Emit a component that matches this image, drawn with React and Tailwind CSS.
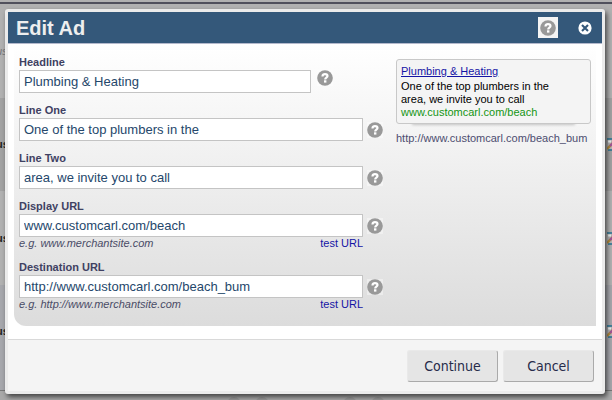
import { useState } from 'react';

const rows = [
  { name: 'us', className: 'h-[94px] bg-[#b1b1b1] italic text-[#77777b]', icon: false },
  { name: 'us', className: 'h-[93px] bg-[#a2a2a2] font-bold text-[#222]', icon: true },
  { name: 'us', className: 'h-[94px] bg-[#b1b1b1] font-bold text-[#222]', icon: true },
  { name: 'us', className: 'h-[105px] bg-[#a6a7ac] pb-3 font-bold text-[#222]', icon: true },
];

function HelpIcon() {
  return (
    <svg viewBox="0 0 16 16" className="size-4" aria-hidden="true">
      <circle cx="8" cy="8" r="7.8" fill="#999" />
      <path d="M5.5 6.4C5.5 4.8 6.5 4.2 8 4.2c1.5 0 2.5.7 2.5 1.9 0 1.6-2.3 1.5-2.3 3.3" fill="none" stroke="#fff" strokeWidth="2.2" />
      <rect x="7" y="10.3" width="2.4" height="2.3" fill="#fff" />
    </svg>
  );
}

function HelpButton({ label }) {
  return (
    <button type="button" aria-label={label} className="shrink-0 bg-white/40">
      <HelpIcon />
    </button>
  );
}

function EditIcon() {
  return (
    <svg viewBox="0 0 13 13" className="size-[13px] shrink-0" aria-hidden="true">
      <rect x="1" y="1" width="11" height="11" fill="#b5b5b5" />
      <path d="M0 1h12v11H1" fill="none" stroke="#267392" strokeWidth="1.6" />
      <path d="M1 2.5h3v2H1z" fill="#e8eeee" />
      <path d="M0 11l6-6" stroke="#b08a3c" strokeWidth="2.4" />
      <path d="M3 8l3-3" stroke="#a0529b" strokeWidth="2" />
    </svg>
  );
}

function Field({ id, label, value, onChange, example, short }) {
  return (
    <div>
      <label htmlFor={id} className="block text-[11px] leading-4 font-bold text-[#3f4162]">{label}</label>
      <div className={short ? 'flex items-start gap-1.5' : 'flex items-center gap-1'}>
        <input
          id={id}
          type="text"
          value={value}
          onChange={(e) => onChange(id, e.target.value)}
          className={`h-[23px] min-w-0 border border-[#c4c4c4] bg-white px-1 text-[13px] text-[#25476b] outline-none ${short ? 'w-[292px]' : 'w-[344px]'}`}
        />
        <HelpButton label={`${label} help`} />
      </div>
      {example && (
        <div className="flex w-[344px] justify-between text-[11px] leading-[13px]">
          <span className="text-[#4a4c66] italic">{example}</span>
          <a href="#test" className="text-[#1414a5]">test URL</a>
        </div>
      )}
    </div>
  );
}

function AdPreview({ ad }) {
  return (
    <div className="mt-[5px] w-[195px] shrink-0">
      <div className="relative">
        <div className="absolute inset-x-4 bottom-0 h-2 shadow-[0_1px_3px_rgba(0,0,0,0.2)]" />
        <div className="relative rounded-[3px] border border-[#c8c8c8] bg-[#f4f4f4] px-1 pt-[5px] pb-1 text-[11px] leading-[13px] text-black">
          <a href="#ad" className="mb-0.5 block text-[#1414a5] underline">{ad.headline}</a>
          <p>{ad.line1}</p>
          <p>{ad.line2}</p>
          <p className="text-[#149614]">{ad.display}</p>
        </div>
      </div>
      <p className="mt-1.5 text-[11px] leading-4 text-[#4d4d70]">{ad.destination}</p>
    </div>
  );
}

function App() {
  const [ad, setAd] = useState({
    headline: 'Plumbing & Heating',
    line1: 'One of the top plumbers in the',
    line2: 'area, we invite you to call',
    display: 'www.customcarl.com/beach',
    destination: 'http://www.customcarl.com/beach_bum',
  });

  const update = (id, value) => setAd({ ...ad, [id]: value });

  return (
    <div className="relative h-screen min-h-[400px] overflow-hidden bg-[#a9a9a9] font-['Liberation_Sans',Arial,sans-serif]">
      {/* Ads list behind the dialog */}
      <div className="border-t-2 border-[#b1b1b1]" aria-hidden="true">
        <div className="h-0.5 bg-[#50505c]" />
        {rows.map((row, index) => (
          <div key={index} className={`-mr-2 -ml-1 flex items-center justify-between text-[11px] ${row.className}`}>
            <span>{row.name}</span>
            {row.icon && <EditIcon />}
          </div>
        ))}
        <div className="h-px bg-[#777]" />
        <div className="flex justify-center gap-3.5 pt-1.5">
          <span className="size-3.5 rounded-full bg-[#999]" />
          <span className="size-3.5 rounded-full bg-[#999]" />
          <span className="ml-15 size-3.5 rounded-full bg-[#999]" />
          <span className="size-3.5 rounded-full bg-[#999]" />
        </div>
      </div>

      <div role="dialog" aria-labelledby="dialog-title" className="absolute inset-x-0 top-[9px] mr-[7px] ml-[5px] rounded-[3px] border-3 border-[#ebebeb] bg-white shadow-[2px_3px_5px_rgba(0,0,0,0.6)]">
        <header className="flex h-8 items-center border-b border-[#b4b9cc] bg-[#34587a] px-2">
          <h1 id="dialog-title" className="flex-1 text-[20px] leading-6 font-bold text-[#eee]">Edit Ad</h1>
          <button type="button" aria-label="Help" className="mr-5 flex h-[21px] w-5 items-center justify-center bg-[#f4f4f4]">
            <HelpIcon />
          </button>
          <button type="button" aria-label="Close" className="mr-0.5">
            <svg viewBox="0 0 14 14" className="size-3.5">
              <circle cx="7" cy="7" r="6.6" fill="#fff" />
              <path d="M4 4l6 6M10 4l-6 6" stroke="#34587a" strokeWidth="2.1" />
            </svg>
          </button>
        </header>

        <form>
          <div className="mx-1.5 mb-[13px] flex justify-between rounded-bl-[12px] bg-linear-to-b from-white to-[#dcdcdc] px-[5px] pt-2.5 pb-[15px]">
            <div className="flex flex-col gap-[9px]">
              <Field id="headline" label="Headline" value={ad.headline} onChange={update} short />
              <Field id="line1" label="Line One" value={ad.line1} onChange={update} />
              <Field id="line2" label="Line Two" value={ad.line2} onChange={update} />
              <Field id="display" label="Display URL" value={ad.display} onChange={update} example="e.g. www.merchantsite.com" />
              <Field id="destination" label="Destination URL" value={ad.destination} onChange={update} example="e.g. http://www.merchantsite.com" />
            </div>
            <AdPreview ad={ad} />
          </div>

          <footer className="flex justify-end gap-[5px] border-t border-[#d9d9d9] bg-[#f4f4f4] px-2 pt-2.5 pb-[9px] font-['DejaVu_Sans_Condensed','DejaVu_Sans',sans-serif] text-[14px] text-[#262b4a]">
            <button type="button" className="h-8 w-[91px] rounded-[3px] border border-t-[#e9e9e9] border-r-[#aaa] border-b-[#aaa] border-l-[#e9e9e9] bg-[#e5e5e5]">Continue</button>
            <button type="button" className="h-8 w-[91px] rounded-[3px] border border-t-[#e9e9e9] border-r-[#aaa] border-b-[#aaa] border-l-[#e9e9e9] bg-[#e5e5e5]">Cancel</button>
          </footer>
        </form>
      </div>
    </div>
  );
}

export default App;
